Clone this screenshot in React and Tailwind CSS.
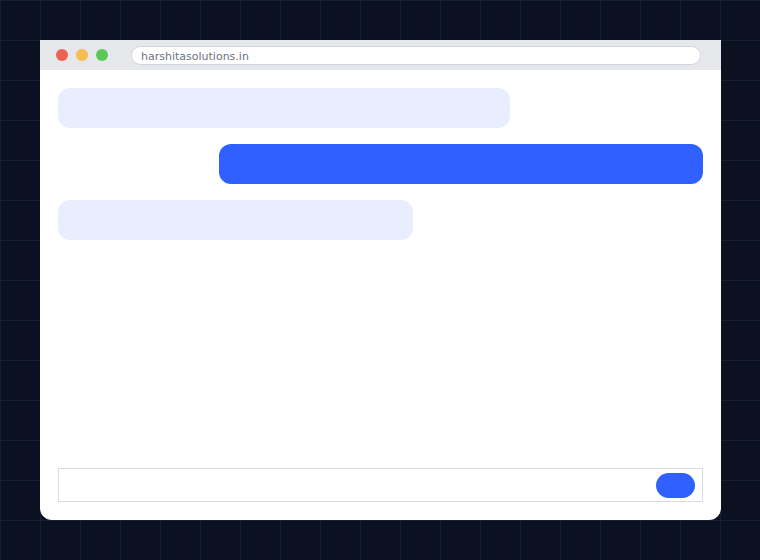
export default function App() {
  return (
    <div className="w-[760px] h-[560px] bg-[#0b1120] bg-[linear-gradient(to_right,#172031_1px,transparent_1px),linear-gradient(to_bottom,#172031_1px,transparent_1px)] bg-[size:40px_40px] pt-10 pl-10 overflow-hidden">
      <div className="w-[681px] h-[480px] bg-white rounded-b-[12px] flex flex-col overflow-hidden">
        <div className="h-[30px] bg-[#e5e7eb] flex items-center pl-4 pr-5 shrink-0">
          <div className="flex gap-2">
            <span className="w-3 h-3 rounded-full bg-[#ef6154]" />
            <span className="w-3 h-3 rounded-full bg-[#f7bd4f]" />
            <span className="w-3 h-3 rounded-full bg-[#5bc85a]" />
          </div>
          <div className="ml-[23px] flex-1 h-[19px] bg-white rounded-full border border-[#d1d5db] flex items-center pl-[9px] text-[11px] leading-none text-[#6b7280] font-['DejaVu_Sans',sans-serif]">
            <span className="translate-y-px">harshitasolutions.in</span>
          </div>
        </div>
        <div className="flex-1 flex flex-col px-[18px] pt-[18px] pb-[18px]">
          <div className="flex flex-col gap-4">
            <div className="w-[452px] h-10 rounded-[12px] bg-[#e8eefe]" />
            <div className="self-end w-[484px] h-10 rounded-[12px] bg-[#3060ff]" />
            <div className="w-[355px] h-10 rounded-[12px] bg-[#e8eefe]" />
          </div>
          <div className="mt-auto h-[34px] border border-[#d9dde3] flex items-center justify-end pr-[7px]">
            <div className="w-[39px] h-[25px] rounded-full bg-[#3060ff]" />
          </div>
        </div>
      </div>
    </div>
  );
}
